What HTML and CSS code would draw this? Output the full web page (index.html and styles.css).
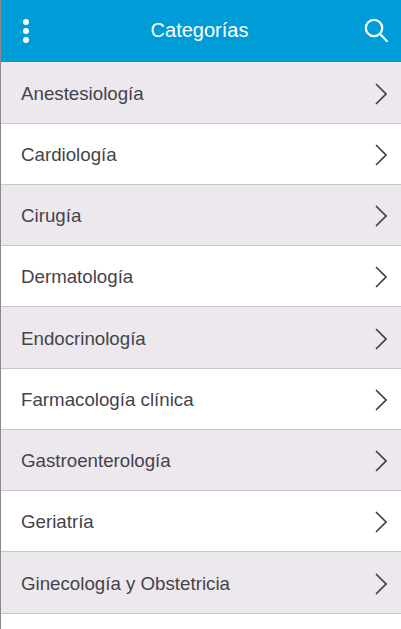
FILE: index.html
```html
<!DOCTYPE html>
<html lang="es">
<head>
<meta charset="utf-8">
<title>Categorías</title>
<link rel="stylesheet" href="styles.css">
</head>
<body>
<div class="app">
  <header class="bar">
    <span class="dots"><i></i><i></i><i></i></span>
    <h1 class="title">Categorías</h1>
    <svg class="search" viewBox="0 0 24 24" width="24" height="24"><circle cx="10" cy="10" r="8.2"/><path d="M16 16l7.2 7.4"/></svg>
  </header>
  <ul class="list">
    <li class="row alt"><span>Anestesiología</span><svg class="chev" viewBox="0 0 12 22" width="12" height="22"><path d="M1 1l10 10L1 21"/></svg></li>
    <li class="row"><span>Cardiología</span><svg class="chev" viewBox="0 0 12 22" width="12" height="22"><path d="M1 1l10 10L1 21"/></svg></li>
    <li class="row alt"><span>Cirugía</span><svg class="chev" viewBox="0 0 12 22" width="12" height="22"><path d="M1 1l10 10L1 21"/></svg></li>
    <li class="row"><span>Dermatología</span><svg class="chev" viewBox="0 0 12 22" width="12" height="22"><path d="M1 1l10 10L1 21"/></svg></li>
    <li class="row alt"><span>Endocrinología</span><svg class="chev" viewBox="0 0 12 22" width="12" height="22"><path d="M1 1l10 10L1 21"/></svg></li>
    <li class="row"><span>Farmacología clínica</span><svg class="chev" viewBox="0 0 12 22" width="12" height="22"><path d="M1 1l10 10L1 21"/></svg></li>
    <li class="row alt"><span>Gastroenterología</span><svg class="chev" viewBox="0 0 12 22" width="12" height="22"><path d="M1 1l10 10L1 21"/></svg></li>
    <li class="row"><span>Geriatría</span><svg class="chev" viewBox="0 0 12 22" width="12" height="22"><path d="M1 1l10 10L1 21"/></svg></li>
    <li class="row alt"><span>Ginecología y Obstetricia</span><svg class="chev" viewBox="0 0 12 22" width="12" height="22"><path d="M1 1l10 10L1 21"/></svg></li>
    <li class="row"></li>
  </ul>
</div>
</body>
</html>
```
FILE: styles.css
```css
html, body {
  margin: 0;
  padding: 0;
  height: 100%;
  overflow: hidden;
  background: #fff;
}
.app {
  height: 629px;
  overflow: hidden;
  border-left: 1px solid #8a8a8a;
  font-family: "Liberation Sans", Arial, sans-serif;
}
.bar {
  height: 62.4px;
  margin-left: -1px;
  background: #009cd8;
  display: flex;
  align-items: center;
  justify-content: space-between;
  padding: 0 13px 0 23px;
  box-sizing: border-box;
}
.dots {
  display: flex;
  flex-direction: column;
  gap: 3px;
  margin-top: -1px;
}
.dots i {
  display: block;
  width: 6px;
  height: 6px;
  border-radius: 50%;
  background: #fff;
}
.title {
  margin: 0 0 2px 6px;
  font-size: 20px;
  font-weight: normal;
  color: #fff;
}
.search {
  fill: none;
  stroke: #fff;
  stroke-width: 2.2;
  stroke-linecap: round;
  margin-bottom: 2px;
}
.list {
  list-style: none;
  margin: 0;
  padding: 0;
}
.row {
  height: 61.25px;
  box-sizing: border-box;
  border-bottom: 1px solid #c9c7ca;
  display: flex;
  align-items: center;
  justify-content: space-between;
  padding: 2px 14px 0 20px;
  font-size: 18.72px;
  color: #45434a;
}
.alt {
  background: #ece8ee;
}
.chev {
  fill: none;
  stroke: #3f3d42;
  stroke-width: 1.6;
}
```
